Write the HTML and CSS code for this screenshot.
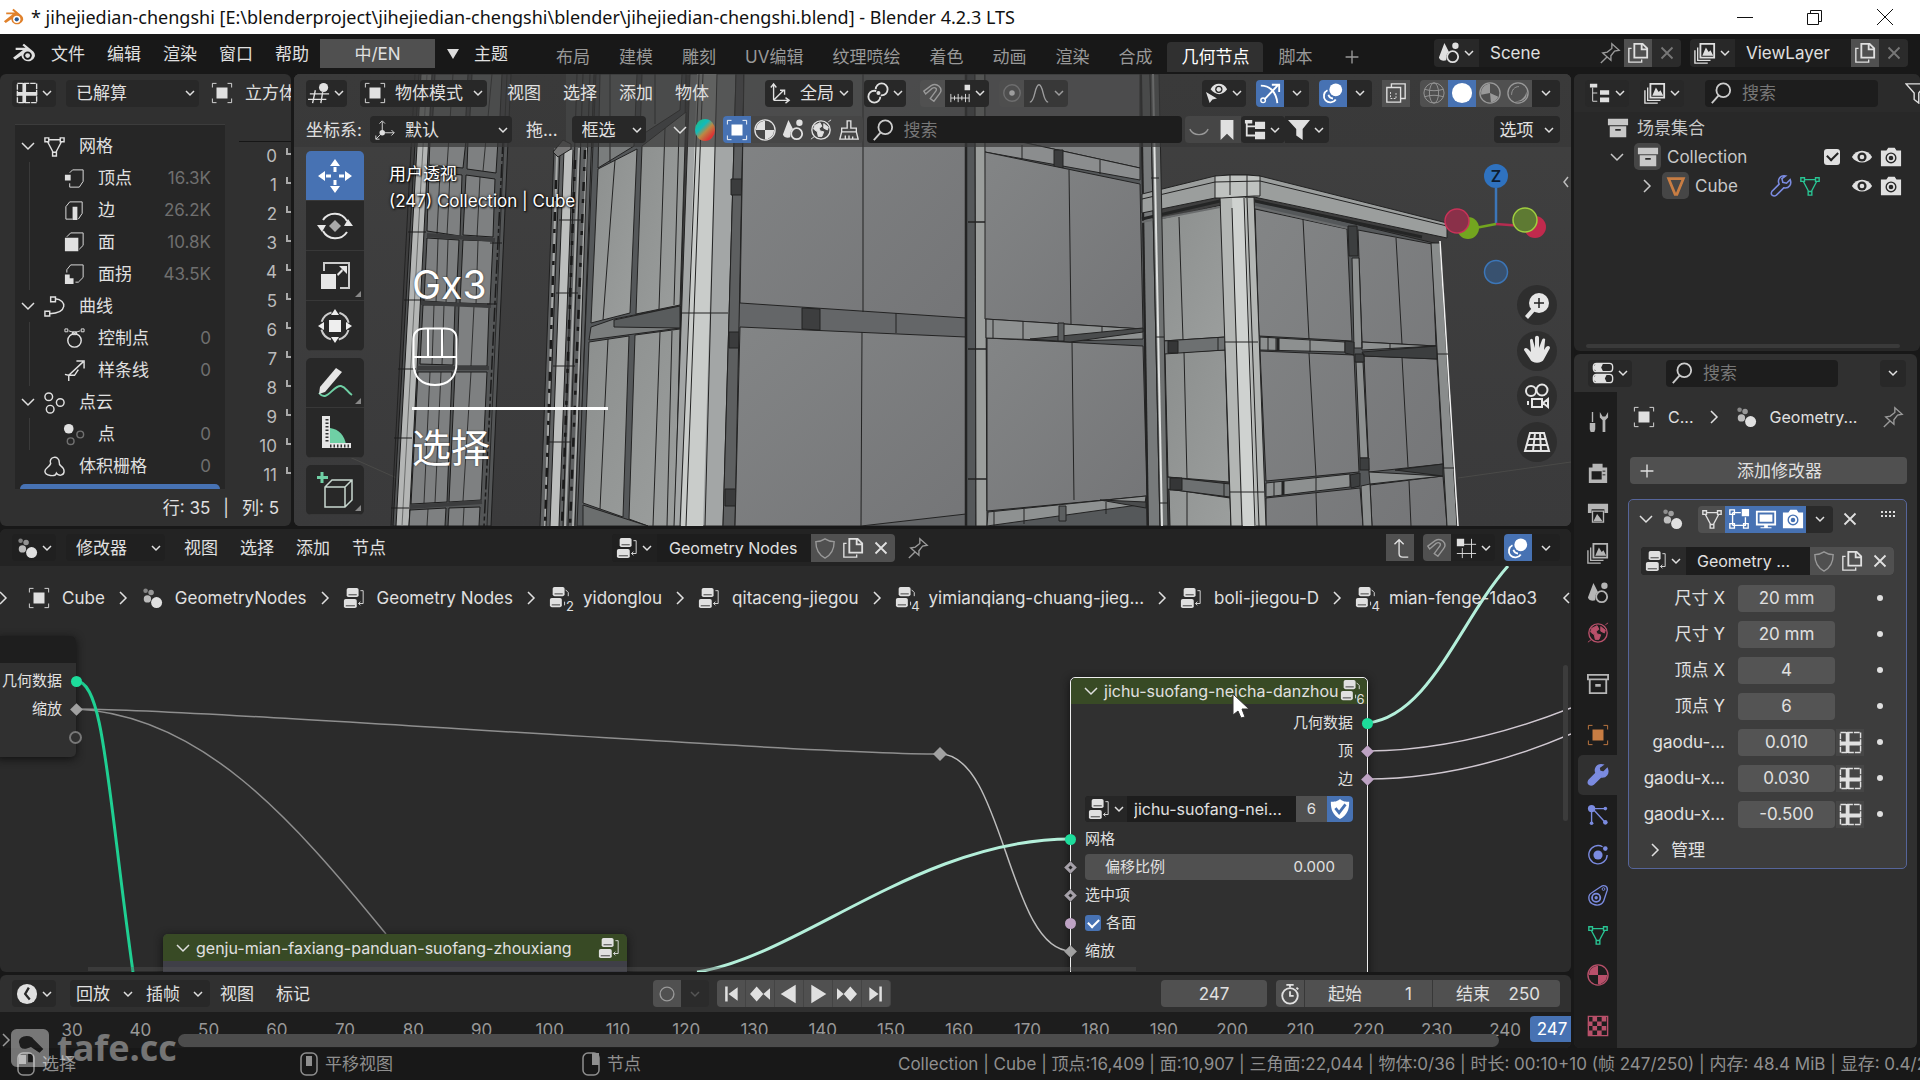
FILE: index.html
```html
<!DOCTYPE html>
<html lang="zh-CN">
<head>
<meta charset="utf-8">
<title>jihejiedian-chengshi - Blender 4.2.3 LTS</title>
<link rel="stylesheet" href="styles.css">
</head>
<body>
<svg class="defs" aria-hidden="true">
  <symbol id="blender" viewBox="0 0 24 24"><path d="M1 16.500 10.500 9H3.500V7H13L10 4.500 11.500 3l9 7.500a6.500 5.800 0 1 1-11.500 4L3 18.500z" fill="currentColor"/><circle cx="15" cy="14.500" r="4" fill="var(--hole,#181818)"/><circle cx="15" cy="14.500" r="2.300" fill="var(--dot,currentColor)"/></symbol>
  <symbol id="chev" viewBox="0 0 12 12"><path d="M2 4l4 4 4-4" class="s15"/></symbol>
  <symbol id="right" viewBox="0 0 12 16"><path d="M3 2l6 6-6 6" class="s15"/></symbol>
  <symbol id="left" viewBox="0 0 12 16"><path d="M9 3L4 8l5 5" class="s15"/></symbol>
  <symbol id="down" viewBox="0 0 16 12"><path d="M2 3l6 6 6-6" class="s15"/></symbol>
  <symbol id="x" viewBox="0 0 24 24"><path d="M6 6l12 12M18 6L6 18" class="s2"/></symbol>
  <symbol id="plus" viewBox="0 0 24 24"><path d="M12 5v14M5 12h14" class="s15"/></symbol>
  <symbol id="sheet" viewBox="0 0 24 24"><path d="M1.500 1.500h21v21h-21z" class="s15" stroke-dasharray="6 1"/><path d="M7 1h4v10h12v4H11v8H7v-8H1v-4h6z" fill="currentColor"/></symbol>
  <symbol id="object" viewBox="0 0 24 24"><path d="M6 6h12v12H6z" fill="currentColor"/><path d="M1.500 6V1.500H6M18 1.500h4.500V6M22.500 18v4.500H18M6 22.500H1.500V18" class="s1"/></symbol>
  <symbol id="mesh" viewBox="0 0 24 24"><path d="M5.500 5h13M4.500 6.500L10.500 18M19.500 6.500L13.500 18M2 3h4v4H2zM18 3h4v4h-4zM10 18h4v4h-4z" class="s15"/></symbol>
  <symbol id="vert" viewBox="0 0 24 24"><path d="M7 6l3-3h11v12l-4 6H7v-4" class="s1"/><path d="M2 8h6v6H2z" fill="currentColor"/></symbol>
  <symbol id="edge" viewBox="0 0 24 24"><path d="M10 21H3V8l4-5h13v12l-4 6" class="s1"/><path d="M10 8h5v14h-5z" fill="currentColor"/></symbol>
  <symbol id="face" viewBox="0 0 24 24"><path d="M4 6l4-4h13v13l-4 4" class="s1"/><path d="M2 7h14v14H2z" fill="currentColor"/></symbol>
  <symbol id="corner" viewBox="0 0 24 24"><path d="M4 10V7l4-5h13v13l-5 5h-3" class="s1"/><path d="M2 12h5v4h4v6H2z" fill="currentColor"/></symbol>
  <symbol id="curve" viewBox="0 0 24 24"><path d="M2 17h5v5H2zM8 2h5v5H8zM13 4c12 1 13 15-6 15.500" class="s15"/></symbol>
  <symbol id="cpoint" viewBox="0 0 24 24"><circle cx="12" cy="14" r="7" class="s15"/><path d="M6 4l6 2 6-2M2 2h3v3H2zM19 2h3v3h-3zM10 5h4v3h-4z" class="s1"/></symbol>
  <symbol id="spline" viewBox="0 0 24 24"><path d="M6 23v-6l-4-1M6 17L21 3M14 2h8v8M6 17h6l4-6" class="s15"/></symbol>
  <symbol id="pcloud" viewBox="0 0 24 24"><circle cx="6" cy="6" r="4" class="s15"/><circle cx="18" cy="12" r="4" class="s15"/><circle cx="7.500" cy="19" r="4" class="s15"/></symbol>
  <symbol id="point" viewBox="0 0 24 24"><circle cx="6" cy="6" r="5" fill="currentColor"/><g opacity=".4"><circle cx="18" cy="12" r="3.500" class="s15"/><circle cx="8" cy="19" r="3.500" class="s15"/></g></symbol>
  <symbol id="volume" viewBox="0 0 24 24"><path d="M8 9C5 2 17-1 17 8c-1 4 5 3 5 9 0 5-6 5-8 2-1 4-12 3-12-2 0-4 4-3 6-8z" class="s15"/></symbol>
  <symbol id="view3d" viewBox="0 0 24 24"><path d="M2 13h21M0 19h20M8 9L5 23M16 11l-2 12" class="s15"/><circle cx="17" cy="6" r="5" fill="currentColor"/></symbol>
  <symbol id="axes" viewBox="0 0 24 24"><path d="M5 20V3M2 6l3-4 3 4M5 20h16M18 17l4 3-4 3M5 20L16 9M12 9h5v5" class="s15"/></symbol>
  <symbol id="axes2" viewBox="0 0 24 24"><path d="M9 14V3M6 5l3-3 3 3M12 15h10M19 12l3 3-3 3M7 17l-5 5M2 18v4h4" class="s1"/><circle cx="9" cy="15" r="3" fill="currentColor"/></symbol>
  <symbol id="link" viewBox="0 0 24 24"><circle cx="16" cy="8" r="6.500" class="s2" stroke-dasharray="32 9" stroke-dashoffset="-20"/><circle cx="8" cy="16" r="6.500" class="s2" stroke-dasharray="32 9"/><circle cx="12.500" cy="12" r="2.200" fill="currentColor"/></symbol>
  <symbol id="magnet" viewBox="0 0 24 24"><path d="M2 10l8-6c6-4 14 3 9 9l-6 8-4-3 6-8c2-3-1-5-4-3l-7 6z" class="s15"/></symbol>
  <symbol id="snap" viewBox="0 0 24 24"><path d="M2 13v9M6 15v5M10 13v9M14 15v5M18 13v9M22 13v9M2 17.500h20" class="s1"/><path d="M17 3h6v6h-6z" fill="currentColor"/></symbol>
  <symbol id="snapg" viewBox="0 0 24 24"><path d="M8 12v11M18 2v21M8 8h15M2 18h21" class="s1"/><path d="M2 2h8v8H2z" fill="currentColor"/></symbol>
  <symbol id="prop" viewBox="0 0 24 24"><circle cx="12" cy="12" r="9" class="s15" opacity=".4"/><circle cx="12" cy="12" r="3" fill="currentColor"/></symbol>
  <symbol id="falloff" viewBox="0 0 24 24"><path d="M2 22c6 0 5-19 10-19s4 19 10 19" class="s15"/></symbol>
  <symbol id="eyecur" viewBox="0 0 24 24"><path d="M5 8c4-8 14-8 18 0-4 7-13 7-18 0z" fill="currentColor"/><circle cx="14" cy="8" r="4" fill="#282828"/><circle cx="14" cy="8" r="2.500" fill="currentColor"/><path d="M0 11l4 12 3-4 5-1z" fill="currentColor"/></symbol>
  <symbol id="gizmo" viewBox="0 0 24 24"><path d="M2 4c10 0 17 7 18 19M6 19L21 3M14 3h8v8" class="s2"/><circle cx="4.500" cy="20" r="2.500" class="s15"/></symbol>
  <symbol id="overlay" viewBox="0 0 24 24"><circle cx="15" cy="8.500" r="7" fill="currentColor"/><path d="M6 9a7 7 0 1 0 9 10M7 14c1 3 3 4 5 4" class="s2"/></symbol>
  <symbol id="xray" viewBox="0 0 24 24"><path d="M2 6h15v16H2zM7 6V2h15v16h-5" class="s15"/><path d="M6 11v7h7M12 12v6" class="s1" stroke-dasharray="2 1.500"/></symbol>
  <symbol id="wire" viewBox="0 0 24 24"><circle cx="12" cy="12" r="11" class="s1"/><ellipse cx="12" cy="12" rx="5" ry="11" class="s1"/><path d="M2 8c7 2 13 2 20 0M2 16c7-2 13-2 20 0" class="s1"/></symbol>
  <symbol id="solid" viewBox="0 0 24 24"><circle cx="12" cy="12" r="11" fill="currentColor"/></symbol>
  <symbol id="matprev" viewBox="0 0 24 24"><circle cx="12" cy="12" r="11" class="s15"/><path d="M12 2a10 10 0 0 0-9.500 12L12 12zM12 12l9 4a10 10 0 0 1-8 6z" fill="currentColor"/></symbol>
  <symbol id="render" viewBox="0 0 24 24"><circle cx="12" cy="12" r="11" class="s15"/><path d="M5 14c0-5 3-9 8-9" class="s1"/><path d="M8 21c8 1 13-6 13-11 2 7-3 13-13 11z" fill="currentColor"/></symbol>
  <symbol id="mat" viewBox="0 0 24 24"><circle cx="12" cy="12" r="11" class="s15"/><path d="M12 2v10H2A10 10 0 0 1 12 2zM12 12h10a10 10 0 0 1-10 10z" fill="currentColor"/></symbol>
  <symbol id="scene" viewBox="0 0 24 24"><path d="M7 1L1 17c1 4 6 4 8 3 0-6 1-8 3-9z" fill="currentColor"/><circle cx="16" cy="16" r="6" class="s2"/><circle cx="19" cy="4" r="3.500" fill="currentColor"/></symbol>
  <symbol id="world" viewBox="0 0 24 24"><circle cx="12" cy="12" r="10" class="s15"/><path d="M5 7l6-3 2 4-3 2 1 3 4 1-2 5-4 0-1-5-4-3zM15 5l5 4-1 3-4-2zM1 22l4-3M20 3l3-2" fill="currentColor" stroke="currentColor"/></symbol>
  <symbol id="brush" viewBox="0 0 24 24"><path d="M10 2h4v8h6v4H4v-4h6zM4 14l-2 8h20l-2-8M8 22v-4M12 22v-4M16 22v-3" class="s15"/></symbol>
  <symbol id="search" viewBox="0 0 24 24"><circle cx="14.500" cy="9" r="7.500" class="s2"/><path d="M9.500 14.500L2 23" class="s2"/></symbol>
  <symbol id="arc" viewBox="0 0 24 24"><path d="M2 11c4 8 16 8 20 0" class="s15"/></symbol>
  <symbol id="bookmark" viewBox="0 0 24 24"><path d="M5 1h14v22l-7-7-7 7z" fill="currentColor"/></symbol>
  <symbol id="tree" viewBox="0 0 24 24"><path d="M3 2v16h9M3 8h9" class="s2"/><path d="M1 1h8v4H1zM12 3h11v8H12zM12 14h11v8H12z" fill="currentColor"/></symbol>
  <symbol id="outliner" viewBox="0 0 24 24"><path d="M4 6v15h5M4 12h5" class="s1"/><path d="M1 2h8v4H1zM12 9h10v5H12zM12 17h10v5H12z" fill="currentColor"/></symbol>
  <symbol id="filter" viewBox="0 0 24 24"><path d="M0 1h24l-8 10v12l-7-5v-7z" fill="currentColor"/></symbol>
  <symbol id="filtero" viewBox="0 0 24 24"><path d="M1 2h22l-8 10v11l-5-4v-7z" class="s15"/></symbol>
  <symbol id="vlayer" viewBox="0 0 24 24"><path d="M7 2h15v15H7z" class="s2"/><path d="M4 6v14h14M1 9v14h14" class="s15"/><path d="M9 15l4-9 3 5 2-2 3 6z" fill="currentColor"/></symbol>
  <symbol id="pin" viewBox="0 0 24 24"><path d="M14 2l8 7-5 1-4 5v5L4 12l5-1 5-4zM9 16l-7 7" class="s15"/></symbol>
  <symbol id="copy" viewBox="0 0 24 24"><path d="M8 2h9l5 5v10H8zM16 2v6h6" class="s2"/><path d="M5 7H2v15h14v-3" class="s15"/></symbol>
  <symbol id="shield" viewBox="0 0 24 24"><path d="M12 2c3 2 6 3 10 3 0 8-2 14-10 18C4 19 2 13 2 5c4 0 7-1 10-3z" class="s15"/></symbol>
  <symbol id="shieldon" viewBox="0 0 24 24"><path d="M12 1c3 3 6 3 10 3 0 9-2 14-10 19C4 18 2 13 2 4c4 0 7 0 10-3z" fill="#fff"/><path d="M7 11l4 5 7-9" fill="none" stroke="#4772b3" stroke-width="3"/></symbol>
  <symbol id="coll" viewBox="0 0 24 24"><path d="M1 2h22v7H1zM3 10h18v12H3z" fill="currentColor"/><path d="M9 13h6v2H9z" fill="#282828"/></symbol>
  <symbol id="collo" viewBox="0 0 24 24"><path d="M1 2h22v5H1zM3 7h18v15H3z" class="s2"/><path d="M9 12h6v3H9z" fill="currentColor"/></symbol>
  <symbol id="cone" viewBox="0 0 24 24"><path d="M4 4h16l-7 17h-2z" class="s3"/></symbol>
  <symbol id="wrench" viewBox="0 0 24 24"><path d="M17 1c-7-1-9 5-7 9L2 18c-2 4 2 6 5 4l8-8c6 1 9-4 7-9l-4 4-4-1-1-4z" fill="var(--f,none)" stroke="currentColor" stroke-width="1.700"/></symbol>
  <symbol id="eye" viewBox="0 0 24 24"><path d="M1 12c5-9 17-9 22 0-5 8-17 8-22 0z" fill="currentColor"/><circle cx="12" cy="12" r="5" fill="#282828"/><circle cx="12" cy="12" r="2.500" fill="currentColor"/></symbol>
  <symbol id="cam" viewBox="0 0 24 24"><path d="M1 5h6l2-3h7l2 3h5v17H1z" fill="currentColor"/><circle cx="12" cy="13" r="6" fill="var(--hole,#282828)"/><circle cx="12" cy="13" r="4.500" fill="currentColor"/><circle cx="12" cy="13" r="2.500" fill="var(--hole,#282828)"/></symbol>
  <symbol id="geo" viewBox="0 0 24 24"><circle cx="5" cy="4" r="2.500" fill="currentColor" opacity=".5"/><circle cx="11" cy="6" r="3" fill="currentColor" opacity=".6"/><circle cx="7" cy="13" r="4" fill="currentColor" opacity=".8"/><circle cx="17" cy="17" r="6" fill="currentColor"/></symbol>
  <symbol id="nodes" viewBox="0 0 24 24"><rect x="4" y="1" width="13" height="10" rx="2" fill="currentColor"/><rect x="1" y="13" width="14" height="10" rx="2" fill="currentColor"/><path d="M6 8.500h9M3 20.500h10" stroke="#333"/><path d="M19 4h3v14h-5M19 16l-2 2 2 2" class="s1"/></symbol>
  <symbol id="nodesn" viewBox="0 0 24 24"><rect x="4" y="0" width="13" height="10" rx="2" fill="currentColor"/><rect x="1" y="12" width="13" height="10" rx="2" fill="currentColor"/><path d="M6 7.500h9M3 19.500h9" stroke="#333"/><path d="M18 3l3 3v4M17 16v4" class="s1"/></symbol>
  <symbol id="uparrow" viewBox="0 0 24 24"><path d="M21 22h-6c-3 0-4-1-4-4V3M6 8l5-5 5 5" class="s15"/></symbol>
  <symbol id="clock" viewBox="0 0 24 24"><circle cx="12" cy="12" r="11" fill="currentColor"/><path d="M14 5l-4 7 5 6" fill="none" stroke="#282828" stroke-width="2.500"/></symbol>
  <symbol id="watch" viewBox="0 0 24 24"><circle cx="12" cy="14" r="8.500" class="s2"/><path d="M12 9v5h4M8 2h8M12 2v3M19 5l2 2" class="s2"/></symbol>
  <symbol id="rec" viewBox="0 0 24 24"><circle cx="12" cy="12" r="7.500" class="s15"/></symbol>
  <symbol id="first" viewBox="0 0 24 24"><path d="M5 3h3v18H5zM20 4v16L9 12z" fill="currentColor"/></symbol>
  <symbol id="prevk" viewBox="0 0 24 24"><path d="M0 12l8-9 8 9-8 9zM24 5v14l-8-7z" fill="currentColor"/></symbol>
  <symbol id="play" viewBox="0 0 24 24"><path d="M4 1l18 11L4 23z" fill="currentColor"/></symbol>
  <symbol id="props" viewBox="0 0 24 24"><rect x="1.500" y="1.500" width="21" height="9" rx="3.500" class="s15"/><rect x="1.500" y="13.500" width="21" height="9" rx="3.500" class="s15"/><path d="M2 5l2-3h8l-2 4 2 4H5l-3-2zM2 17l2-3h12l-2 4 2 4H5l-3-2z" fill="currentColor"/></symbol>
  <symbol id="tools" viewBox="0 0 24 24"><path d="M6 1v11" class="s15"/><path d="M3 13h6v7l-1 3H4l-1-3zM14 1v6l3 3v13h3V10l3-3V1l-3 5h-3z" fill="currentColor"/></symbol>
  <symbol id="rcam" viewBox="0 0 24 24"><path d="M2 6h4V2h11v4h5v17H2zM5 10v9h11v-9z" fill="currentColor" fill-rule="evenodd"/><path d="M17 10h3M17 14h3" stroke="#1d1d1d"/></symbol>
  <symbol id="output" viewBox="0 0 24 24"><path d="M1 2h22v10h-4V8H5v4H1z" fill="currentColor"/><path d="M6 10h12v12H6z" class="s15"/><path d="M7 21l4-8 3 4 3 4z" fill="currentColor"/></symbol>
  <symbol id="part" viewBox="0 0 24 24"><path d="M6 5h14M6 5l13 14M5 6v15" class="s15"/><circle cx="5" cy="5" r="4" fill="currentColor"/><circle cx="20" cy="5" r="2" fill="currentColor"/><circle cx="20" cy="20" r="2.500" fill="currentColor"/><circle cx="5" cy="21" r="2" fill="currentColor"/></symbol>
  <symbol id="physics" viewBox="0 0 24 24"><path d="M17 3a10 10 0 1 0 5 9" class="s15"/><circle cx="12" cy="12" r="5" fill="currentColor"/><circle cx="20" cy="5" r="2.500" fill="currentColor"/></symbol>
  <symbol id="constr" viewBox="0 0 24 24"><path d="M15 3c4-3 8 0 7 4l-4 12c-4 7-16 4-16-4 0-3 2-5 4-6z" class="s15"/><circle cx="10" cy="15" r="4.500" class="s2"/><circle cx="10" cy="15" r="1.800" fill="currentColor"/><circle cx="18" cy="5.500" r="1.500" class="s1"/></symbol>
  <symbol id="checker" viewBox="0 0 24 24"><path d="M1.500 1.500h21v21h-21z" class="s15"/><path d="M6 2h5v5H6zM16 2h5v5h-5zM1 7h5v5H1zM11 7h5v5h-5zM6 12h5v5H6zM16 12h5v5h-5zM1 17h5v5H1zM11 17h5v5h-5z" fill="currentColor"/></symbol>
  <symbol id="editbox" viewBox="0 0 24 24"><path d="M5 5h9M5 5v14M5 19h14V10" class="s15"/><path d="M2 2h5v5H2zM2 17h5v5H2zM17 17h5v5h-5z" class="s15"/><path d="M15 1h8v8h-8z" fill="currentColor"/></symbol>
  <symbol id="monitor" viewBox="0 0 24 24"><path d="M2 4h20v14H2z" class="s2"/><path d="M5 7h14v8H5zM10 18h4v3h4v1H6v-1h4z" fill="currentColor"/></symbol>
  <symbol id="grip" viewBox="0 0 16 8"><path d="M1 2h14M1 6h14" stroke="currentColor" stroke-width="2" stroke-dasharray="2 2"/></symbol>
  <symbol id="mouseL" viewBox="0 0 18 24"><rect x="1" y="1" width="16" height="22" rx="5" class="s15"/><path d="M2 3h7v9H2z" fill="currentColor"/></symbol>
  <symbol id="mouseM" viewBox="0 0 18 24"><rect x="1" y="1" width="16" height="22" rx="5" class="s15"/><path d="M6 4h6v10H6z" fill="currentColor"/></symbol>
  <symbol id="mouseR" viewBox="0 0 18 24"><rect x="1" y="1" width="16" height="22" rx="5" class="s15"/><path d="M10 1h7v12h-7z" fill="currentColor"/></symbol>
</svg>

<div class="app">
  <header class="title">
    <svg class="ic logo"><use href="#blender"/></svg>
    <h1>* jihejiedian-chengshi [E:\blenderproject\jihejiedian-chengshi\blender\jihejiedian-chengshi.blend] - Blender 4.2.3 LTS</h1>
    <div class="winbtns">
      <button aria-label="最小化"><svg viewBox="0 0 16 16"><path d="M0 8.500h16" class="s1"/></svg></button>
      <button aria-label="还原"><svg viewBox="0 0 16 16"><path d="M.5 4.500h11v11H.5zM3.500 4V1.500h11v11H12" class="s1"/></svg></button>
      <button aria-label="关闭"><svg viewBox="0 0 16 16"><path d="M0 0l16 16M16 0L0 16" class="s1"/></svg></button>
    </div>
  </header>

  <nav class="topbar">
    <svg class="ic big"><use href="#blender"/></svg>
    <div class="menus"><button>文件</button><button>编辑</button><button>渲染</button><button>窗口</button><button>帮助</button></div>
    <button class="lang">中/EN</button>
    <button class="theme"><i></i>主题</button>
    <div class="tabs"><button>布局</button><button>建模</button><button>雕刻</button><button>UV编辑</button><button>纹理喷绘</button><button>着色</button><button>动画</button><button>渲染</button><button>合成</button><button class="on">几何节点</button><button>脚本</button><button aria-label="添加工作区"><svg class="ic"><use href="#plus"/></svg></button></div>
    <div class="idsel scene-sel"><button class="pick" aria-label="场景"><svg class="ic"><use href="#scene"/></svg><svg class="ch"><use href="#chev"/></svg></button><input aria-label="场景名称" value="Scene"><button class="flat dim" aria-label="固定"><svg class="ic"><use href="#pin"/></svg></button><button class="lit" aria-label="新建"><svg class="ic"><use href="#copy"/></svg></button><button class="off" aria-label="删除"><svg class="ic"><use href="#x"/></svg></button></div>
    <div class="idsel layer-sel"><button class="pick" aria-label="视图层"><svg class="ic"><use href="#vlayer"/></svg><svg class="ch"><use href="#chev"/></svg></button><input aria-label="视图层名称" value="ViewLayer"><button class="lit" aria-label="新建"><svg class="ic"><use href="#copy"/></svg></button><button class="off" aria-label="删除"><svg class="ic"><use href="#x"/></svg></button></div>
  </nav>

  <main class="work">
    <div class="leftcol">
      <div class="upper">
        <section class="sheet">
          <div class="hdr">
            <button class="pick" aria-label="编辑器类型"><svg class="ic"><use href="#sheet"/></svg><svg class="ch"><use href="#chev"/></svg></button>
            <span class="sel w133"><select aria-label="求值状态"><option>已解算</option></select><svg class="ch"><use href="#chev"/></svg></span>
            <span class="objname"><svg class="ic"><use href="#object"/></svg>立方体</span>
          </div>
          <div class="sheetbody">
            <ul class="dataset">
              <li><svg class="dn"><use href="#down"/></svg><svg class="ic"><use href="#mesh"/></svg><b>网格</b></li>
              <li class="sub"><svg class="ic"><use href="#vert"/></svg><b>顶点</b><em>16.3K</em></li>
              <li class="sub"><svg class="ic"><use href="#edge"/></svg><b>边</b><em>26.2K</em></li>
              <li class="sub"><svg class="ic"><use href="#face"/></svg><b>面</b><em>10.8K</em></li>
              <li class="sub"><svg class="ic"><use href="#corner"/></svg><b>面拐</b><em>43.5K</em></li>
              <li><svg class="dn"><use href="#down"/></svg><svg class="ic"><use href="#curve"/></svg><b>曲线</b></li>
              <li class="sub"><svg class="ic"><use href="#cpoint"/></svg><b>控制点</b><em>0</em></li>
              <li class="sub"><svg class="ic"><use href="#spline"/></svg><b>样条线</b><em>0</em></li>
              <li><svg class="dn"><use href="#down"/></svg><svg class="ic"><use href="#pcloud"/></svg><b>点云</b></li>
              <li class="sub"><svg class="ic"><use href="#point"/></svg><b>点</b><em>0</em></li>
              <li class="leaf"><svg class="ic"><use href="#volume"/></svg><b>体积栅格</b><em>0</em></li>
              <li class="picked"></li>
            </ul>
            <div class="vbar"></div>
            <table class="rows"><thead><tr><th></th><th></th></tr></thead><tbody>
              <tr><td>0</td><td></td></tr><tr><td>1</td><td></td></tr><tr><td>2</td><td></td></tr><tr><td>3</td><td></td></tr><tr><td>4</td><td></td></tr><tr><td>5</td><td></td></tr><tr><td>6</td><td></td></tr><tr><td>7</td><td></td></tr><tr><td>8</td><td></td></tr><tr><td>9</td><td></td></tr><tr><td>10</td><td></td></tr><tr><td>11</td><td></td></tr></tbody></table>
          </div>
          <div class="sheetfoot"><span>行: 35</span><span>|</span><span>列: 5</span></div>
        </section>

        <section class="view">
          <svg class="scene" viewBox="294 74 1277 452" preserveAspectRatio="xMidYMid slice">
            <defs>
              <linearGradient id="bg" x1="0" y1="0" x2="0" y2="1"><stop offset="0" stop-color="#404040"/><stop offset="1" stop-color="#3a3a3b"/></linearGradient>
              <linearGradient id="lt" x1="0" y1="0" x2="1" y2="1"><stop offset="0" stop-color="#8c8f8e"/><stop offset="1" stop-color="#9b9e9d"/></linearGradient>
              <linearGradient id="md" x1="0" y1="0" x2="1" y2="1"><stop offset="0" stop-color="#838586"/><stop offset="1" stop-color="#747577"/></linearGradient>
            </defs>
            <path d="M294 74h1277v452H294z" fill="url(#bg)"/>
            <path d="M1458 478L1571 462M345 455l54 24" stroke="#4a4a48" fill="none"/>
            <g stroke="#1c1c1c">
              <path d="M419 74h92L491 526h-98z" fill="#535556"/>
              <path d="M421 74h11L409 526h-13z" fill="#b4b6b5"/>
              <path d="M427 74L402 526" stroke="#6b6d6c"/>
              <path d="M435 74h33l-3 60-33-3zM472 74h30l-3 64-30-4zM430 140h36l-3 28-34-3zM468 140h30l-2 33-29-4zM429 171l33 4-2 61-33-5zM466 175l29 4-2 58-30-2zM427 238l32 2-3 63-32-2zM463 240l30 1-3 63-30-1zM423 305h32l-2 60-33-1zM459 305l30 2-2 59h-30zM418 372h34l-5 130-36 2zM455 372h32l-6 128-32 2zM410 510l36-2-1 18h-36zM449 508l31-1-1 19h-31z" fill="#7e8081"/>
              <path d="M453 74l-6 93M492 74l-9 97M440 173l-3 61M450 174l-3 61M480 177l-3 60M438 239l-2 64M448 240l-2 63M478 241l-2 63M434 305l-2 60M444 305l-2 60M474 306l-3 60M430 372l-6 131M441 372l-6 131M471 372l-8 129M428 509l-1 17M464 508l-1 18M507 74l-20 452M415 74l-24 452" fill="none" stroke-width=".8"/>
              <path d="M503 140l-19 386" stroke-dasharray="14 3 4 3" stroke-width="1.500" fill="none"/>
              <path d="M427 235l68 5M421 303l70 3M417 368h72M410 507l72-5" stroke="#3c3d3e" stroke-width="4"/>
              <path d="M408 232h18M404 300h20M398 369h18M394 438h18M391 508h18M490 243h12M487 304h10" />
            </g>
            <path d="M566 74h28l-3 80h-25zM554 148h40l-16 378h-38z" fill="#5f6162"/>
            <path d="M564 150h9l-14 376h-9z" fill="#bcbebd"/>
            <path d="M557 156l-12 370M579 148l-14 378M587 148l-14 378" stroke="#a9abaa" stroke-width="2" fill="none"/>
            <path d="M554 150l-14 376M560 150l-14 376M564 150l-14 376M573 150l-14 376M577 74l-14 452M583 74l-15 452M590 74l-15 452M594 74l-16 452" stroke="#1f1f1f" fill="none"/>
            <path d="M556 180l-11 346M575 160l-13 366M585 150l-15 376" stroke="#1a1a1a" stroke-width="2.500" stroke-dasharray="9 8 4 11" fill="none"/>
            <path d="M559 220h23M556 293h22M553 366h22M549 442h22M553 152l10-12 8 4v5l-13 8z" fill="#777" stroke="#222"/>
            <g stroke="#232323" stroke-width="1">
              <path d="M596 74h90l-10 452h-99z" fill="#55585a"/>
              <path d="M600 74h37l-3 72-36 22zM642 74h40l-2 36-40 26z" fill="#7a7d7d"/>
              <path d="M598 169l39-20-7 164-39 10z" fill="url(#lt)"/>
              <path d="M642 146l44-34-6 193-44 9z" fill="url(#lt)"/>
              <path d="M589 342l40-6-6 181-40-14zM635 335l45-6-5 197h-27l-19-7z" fill="url(#lt)"/>
              <path d="M591 327l23-8 66-13v22l-91 12z" fill="#7b7e7e"/><path d="M614 320l66-14v22l-66-1z" fill="#595c5d"/>
              <path d="M615 160l-12 160M665 128l-6 181M608 339l-8 170M660 332l-7 194M679 130l-5 175M672 331l-5 195M610 74v88M655 74v50" fill="none"/>
              <path d="M583 505l65 21h-65z" fill="#6b6e6e"/>
              <path d="M690 74h46l-13 452h-49z" fill="#a3a6a6"/>
              <path d="M697 74h20l-14 452h-22z" fill="#c9ccca" stroke="none"/>
              <path d="M699 74l-19 452M703 74l-17 452M717 74l-12 452M680 313h48" fill="none"/>
              <path d="M736 74h8l-8 452h-13z" fill="#5d5f60"/>
              <path d="M731 179h12v16h-12zM729 332h11v16h-11zM725 489h11v17h-11z" fill="#3b3c3d"/>
              <path d="M744 74h222v452H735z" fill="#646668"/>
              <path d="M744 74h222v244l-226-15z" fill="url(#md)"/>
              <path d="M740 327l226 10v177l-105 12H735z" fill="url(#md)"/>
              <path d="M802 308l18 1v21l-18-1z" fill="#3d3e3f"/>
              <path d="M863 74v238M862 332l-1 194M896 313v20" fill="none"/>
              <path d="M966 74h9l1 452h-10z" fill="#55585a"/>
              <path d="M975 74h10l3 452h-12z" fill="#9b9e9c"/>
              <path d="M966 74v452" stroke-width="2.500"/><path d="M968 222h19M968 349h19M968 479h19" stroke-width="1.500"/>
              <path d="M985 74h156l6 452H987z" fill="#55585a"/>
              <path d="M985 74h155v94l-155-34z" fill="#818384"/>
              <path d="M985 134l155 34v12l-155-28z" fill="#8b8d8e"/>
              <path d="M1054 150h9v18h-9z" fill="#3b3c3d"/>
              <path d="M985 152l155 32 3 145-158-10z" fill="url(#md)"/>
              <path d="M987 338l156 8 4 150-160 15z" fill="url(#md)"/>
              <path d="M986 319l157 10v10l-73 2-84-3zM988 512l158-16-1 8-158 22z" fill="#8e9191"/>
              <path d="M1030 339l113-11v4l-73 10zM1100 500l46 2v6z" fill="#4a4c4d"/>
              <path d="M993 320v18M1023 321v18M1058 323h6v18h-6zM1102 326v6M994 512v14M1024 509v15M1059 506h7v15h-7zM1106 502v12" fill="#5c5f60"/>
              <path d="M1069 170l2 154M1072 342l2 158M1022 145v14M1100 160v14" fill="none"/>
              <path d="M1141 74h9l10 452h-12z" fill="#777a7b"/>
              <path d="M1141 74l7 452" stroke-width="2"/>
              <path d="M1160 219l62-14 4 132-63 4z" fill="url(#lt)"/>
              <path d="M1165 353l60-3 4 132-61-5zM1169 489l61 9 1 28h-61z" fill="url(#lt)"/>
              <path d="M1163 341l62-4v13l-61 4zM1167 477l63 7v13l-63-8z" fill="#6d7071"/>
              <path d="M1168 341h10v12h-10zM1170 478h12v12h-12z" fill="#353637"/>
              <path d="M1218 337v13M1224 483v14M1179 217l4 123M1184 352l3 126M1187 492v34" fill="none"/>
              <path d="M1254 200l184 44 19 282h-194z" fill="#55585a"/>
              <path d="M1255 209l92 20 5 112-93-5zM1358 230l74 14 4 102-74-4zM1260 351l94 4 5 117-93 9zM1364 356l73 3 6 105-74 8zM1266 498l94-10 3 38h-97zM1370 485l73-9 4 50h-75z" fill="url(#md)"/>
              <path d="M1260 337l85 5v10l-85-2zM1266 483l84-9v13l-84 10zM1352 258h7l3 90h-8zM1356 362h7l5 96h-8zM1361 486l9-2 2 42h-9zM1362 342l74 4-74 4zM1369 472l74 4-73 8z" fill="#8d9090"/>
              <path d="M1362 352l75-6v13l-73-3zM1395 470l48-6v12zM1345 341l9 1v13l-9-2zM1350 475l10-2v13l-9 2zM1348 226h9l1 30h-9zM1355 354h9v8h-9zM1360 458h9v12h-9z" fill="#3c3e3f"/>
              <path d="M1303 219l6 120M1396 238l6 106M1309 353l7 123M1402 357l6 110M1316 493l1 33M1409 481l2 45M1268 337v13M1276 338v13M1310 340v12M1274 482v14M1283 481v14M1316 478v13M1390 344v5" fill="none"/>
              <path d="M1278 338v13M1283 481v14" stroke-width="3"/>
              <path d="M1431 243h9l17 283h-10z" fill="#898c8c"/><path d="M1440 241l18 285" stroke="#f2f2f2" stroke-width="1.500"/>
              <path d="M1437 354h11M1443 468h11" />
              <path d="M1220 197h34l12 329h-35z" fill="#b3b6b4"/>
              <path d="M1232 197h13l11 329h-13z" fill="#cfd2d0" stroke="none"/><path d="M1232 208l10 318M1244 198l11 328M1247 198l12 328M1225 342h33M1230 492h34" fill="none"/>
              <path d="M1142 194l73-18 15-1h17l13 1 187 47v15l-193-41h-34l-78 16z" fill="#9b9e9d"/>
              <path d="M1215 176l15-1h17l13 1v20h-6l-16 1-16 1h-7z" fill="#bfc2c0"/>
              <path d="M1142 199l73-17 45-1 187 45M1230 175v20M1247 175v21" fill="none"/>
              <path d="M1142 219l78-18M1255 201l167 36" stroke="#242525" stroke-width="3" fill="none"/>
              <path d="M1142 222l78-15M1255 207l92 21" stroke="#6a6c6d" stroke-width="2" fill="none"/>
              <path d="M1150 74h9l9 452h-8z" fill="#6f7272"/><path d="M1153 74l9 452" stroke="#dfe1e0" stroke-width="2"/><path d="M1151 178h8M1156 337h8M1160 503h8"/>
            </g>
            <g stroke-width="2.500" fill="none"><path d="M1496 188v36" stroke="#3c76b8"/><path d="M1496 224l-26 5" stroke="#73a51f"/><path d="M1496 224l38 3" stroke="#b52c50"/></g>
            <circle cx="1468" cy="228" r="11" fill="#73a51f"/><circle cx="1535" cy="227" r="11" fill="#c12a4d"/><circle cx="1457" cy="221" r="12" fill="#8a3049" stroke="#c73258" stroke-width="1.500"/><circle cx="1525" cy="220" r="12" fill="#5e7a33" stroke="#9fce3e" stroke-width="1.500"/><circle cx="1496" cy="272" r="11.500" fill="#38516f" stroke="#3c76b8" stroke-width="1.500"/><circle cx="1496" cy="176" r="12" fill="#2f72bf"/>
            <text x="1496" y="182" text-anchor="middle" class="ztext">Z</text>
            <g fill="#2c2c2c" opacity=".85"><circle cx="1537" cy="305" r="20"/><circle cx="1537" cy="351" r="20"/><circle cx="1537" cy="396" r="20"/><circle cx="1537" cy="442" r="20"/></g>
            <g fill="#e6e6e6"><circle cx="1539" cy="303" r="10"/><path d="M1532 308l3 3-7 8-3-3z"/><path d="M1530 359l-6-9c0-2 2-3 4-1l3 3-1-11c0-3 3-3 3 0l2 7 0-10c0-3 4-3 4 0l0 10 3-8c1-2 4-2 3 1l-1 9 2-3c2-2 4-1 4 1l-6 11c-2 5-12 5-14 0z"/></g>
            <path d="M1539 298v10M1534 303h10" stroke="#222" stroke-width="1.500"/>
            <g fill="none" stroke="#e6e6e6" stroke-width="2"><circle cx="1531" cy="391" r="5"/><circle cx="1542" cy="390" r="5.500"/><path d="M1532 399h10v8h-10zM1528 401v4M1543 403l5-4v8z"/><path d="M1530 433h14l5 18h-24zM1535 433l-2 18M1540 433l1 18M1528 439h18M1527 445h21"/></g>
            <path d="M1568 177l-4 5 4 5" stroke="#bbb" fill="none" stroke-width="1.500"/>
          </svg>
          <div class="vhdr">
            <button class="pick vp" aria-label="编辑器类型"><svg class="ic"><use href="#view3d"/></svg><svg class="ch"><use href="#chev"/></svg></button>
            <span class="sel w127"><svg class="ic"><use href="#object"/></svg><select aria-label="模式"><option>物体模式</option></select><svg class="ch"><use href="#chev"/></svg></span>
            <div class="menus vm"><button>视图</button><button>选择</button><button>添加</button><button>物体</button></div>
            <span class="sel w88 orient"><svg class="ic"><use href="#axes"/></svg><select aria-label="变换方向"><option>全局</option></select><svg class="ch"><use href="#chev"/></svg></span>
            <button class="pick narrow" aria-label="轴心点"><svg class="ic"><use href="#link"/></svg><svg class="ch"><use href="#chev"/></svg></button>
            <div class="grp"><button class="lit w24 dim" aria-label="吸附"><svg class="ic"><use href="#magnet"/></svg></button><button class="pick" aria-label="吸附至"><svg class="ic"><use href="#snap"/></svg><svg class="ch"><use href="#chev"/></svg></button></div>
            <div class="grp faded"><button class="lit w24" aria-label="衰减编辑"><svg class="ic"><use href="#prop"/></svg></button><button class="pick" aria-label="衰减类型"><svg class="ic"><use href="#falloff"/></svg><svg class="ch"><use href="#chev"/></svg></button></div>
            <div class="right">
              <button class="pick" aria-label="可见性"><svg class="ic"><use href="#eyecur"/></svg><svg class="ch"><use href="#chev"/></svg></button>
              <div class="grp"><button class="blue" aria-label="控件"><svg class="ic"><use href="#gizmo"/></svg></button><button class="chbtn" aria-label="控件选项"><svg class="ch"><use href="#chev"/></svg></button></div>
              <div class="grp"><button class="blue" aria-label="叠加层"><svg class="ic"><use href="#overlay"/></svg></button><button class="chbtn" aria-label="叠加层选项"><svg class="ch"><use href="#chev"/></svg></button></div>
              <button class="lit" aria-label="透视"><svg class="ic"><use href="#xray"/></svg></button>
              <div class="grp shading"><button class="lit dim" aria-label="线框"><svg class="ic"><use href="#wire"/></svg></button><button class="blue" aria-label="实体"><svg class="ic"><use href="#solid"/></svg></button><button class="lit dim" aria-label="材质预览"><svg class="ic"><use href="#matprev"/></svg></button><button class="lit dim" aria-label="渲染"><svg class="ic"><use href="#render"/></svg></button><button class="chbtn" aria-label="着色选项"><svg class="ch"><use href="#chev"/></svg></button></div>
            </div>
          </div>
          <div class="vhdr second">
            <span class="lab">坐标系:</span>
            <span class="sel w142"><svg class="ic"><use href="#axes2"/></svg><select aria-label="坐标系"><option>默认</option></select><svg class="ch"><use href="#chev"/></svg></span>
            <span class="lab drag">拖...</span>
            <span class="sel w74"><select aria-label="拖动"><option>框选</option></select><svg class="ch"><use href="#chev"/></svg></span>
            <div class="assets">
              <svg class="dn"><use href="#down"/></svg>
              <i class="ball"></i>
              <div class="grp"><button class="blue" aria-label="物体"><svg class="ic"><use href="#object"/></svg></button><button class="lit" aria-label="材质"><svg class="ic"><use href="#mat"/></svg></button><button class="lit" aria-label="场景"><svg class="ic"><use href="#scene"/></svg></button><button class="lit" aria-label="世界"><svg class="ic"><use href="#world"/></svg></button><button class="lit" aria-label="笔刷"><svg class="ic"><use href="#brush"/></svg></button></div>
            </div>
            <label class="find wide"><svg class="ic"><use href="#search"/></svg><input aria-label="搜索资产" placeholder="搜索"></label>
            <div class="grp tail"><button class="lit dim" aria-label="隐藏"><svg class="ic"><use href="#arc"/></svg></button><button class="lit" aria-label="书签"><svg class="ic"><use href="#bookmark"/></svg></button><button class="pick" aria-label="目录"><svg class="ic"><use href="#tree"/></svg><svg class="ch"><use href="#chev"/></svg></button><button class="pick" aria-label="过滤"><svg class="ic"><use href="#filter"/></svg><svg class="ch"><use href="#chev"/></svg></button></div>
            <button class="pick opts">选项<svg class="ch"><use href="#chev"/></svg></button>
          </div>
          <div class="viewbody">
            <div class="toolbar">
              <div class="tg">
                <button class="on" aria-label="移动"><svg viewBox="0 0 36 36"><path d="M18 1l5 7H13zM18 35l5-7H13zM1 18l7-5v10zM35 18l-7-5v10zM16.500 9h3v5h-3zM16.500 22h3v5h-3zM9 16.500h5v3H9zM22 16.500h5v3h-5z" fill="#fff"/></svg></button>
                <button aria-label="旋转"><svg viewBox="0 0 36 36"><path d="M6 12a14 14 0 0 1 24 1M30 24a14 14 0 0 1-24-1" fill="none" stroke="#e6e6e6" stroke-width="2"/><path d="M18 12l6 6-6 6-6-6z" fill="#a9a9a9"/><path d="M0 17h9l-4 7zM36 18h-9l4-7z" fill="#e6e6e6"/></svg></button>
                <button class="more" aria-label="缩放"><svg viewBox="0 0 36 36"><path d="M7 13V5h25v25h-9" fill="none" stroke="#ccc" stroke-width="2"/><path d="M4 16h15v15H4zM22 8h8v8zM20 16l5-5 1 2-5 5z" fill="#e6e6e6"/></svg></button>
                <button aria-label="变换"><svg viewBox="0 0 36 36"><circle cx="18" cy="18" r="14" fill="none" stroke="#ccc" stroke-width="2" stroke-dasharray="14 8" stroke-dashoffset="-4"/><path d="M12 12h12v12H12zM18 1l4 6h-8zM18 35l4-6h-8zM1 18l6-4v8zM35 18l-6-4v8z" fill="#eee"/></svg></button>
              </div>
              <div class="tg">
                <button class="more" aria-label="标注"><svg viewBox="0 0 36 36"><path d="M2 28c8 10 14-8 22-7 5 1 6 6 11 9" fill="none" stroke="#6fd0a5" stroke-width="2"/><path d="M19 3l6 4L8 27l-6 2 1-7z" fill="#e6e6e6"/></svg></button>
                <button aria-label="测量"><svg viewBox="0 0 36 36"><path d="M13 13c9 1 15 8 16 17H13z" fill="#6fd0a5"/><path d="M5 1h8M5 1v32h29v-5H13V1" fill="#e6e6e6"/><path d="M10 4v24M13 31h20" stroke="#333" stroke-dasharray="1.500 2" stroke-width="3"/></svg></button>
              </div>
              <div class="tg"><button class="more" aria-label="添加立方体"><svg viewBox="0 0 36 36"><path d="M8 15l7-7h20v20l-7 7H8zM8 15h20v20M28 15l7-7" fill="none" stroke="#c8d8d0" stroke-width="1.500"/><path d="M5 0v11M0 5.500h11" stroke="#6fd0a5" stroke-width="3"/></svg></button></div>
            </div>
            <div class="hud">
              <p>用户透视</p><p>(247) Collection | Cube</p>
              <div class="keys"><strong>Gx3</strong><svg class="bigmouse" viewBox="0 0 46 60"><path d="M1.500 30V12c0-7 4-10.500 12-10.500h19c8 0 12 3.500 12 10.500v24c0 14-8 22-21.500 22S1.500 50 1.500 36zM1.500 30h43M16 2v28M30 2v28" fill="none" stroke="#fff" stroke-width="2"/></svg><hr><strong>选择</strong></div>
            </div>
          </div>
        </section>
      </div>

      <section class="nodeed">
        <div class="hdr nh">
          <button class="pick" aria-label="编辑器类型"><svg class="ic"><use href="#geo"/></svg><svg class="ch"><use href="#chev"/></svg></button>
          <span class="sel w99"><select aria-label="节点树类型"><option>修改器</option></select><svg class="ch"><use href="#chev"/></svg></span>
          <div class="menus"><button>视图</button><button>选择</button><button>添加</button><button>节点</button></div>
          <div class="idsel tree-sel"><button class="pick" aria-label="节点树"><svg class="ic"><use href="#nodes"/></svg><svg class="ch"><use href="#chev"/></svg></button><input aria-label="节点树名称" value="Geometry Nodes"><button class="lit dim" aria-label="伪用户"><svg class="ic"><use href="#shield"/></svg></button><button class="lit" aria-label="新建"><svg class="ic"><use href="#copy"/></svg></button><button class="lit" aria-label="断开"><svg class="ic"><use href="#x"/></svg></button></div>
          <button class="flat dim" aria-label="固定"><svg class="ic"><use href="#pin"/></svg></button>
          <div class="right">
            <button class="lit" aria-label="上一级"><svg class="ic"><use href="#uparrow"/></svg></button>
            <div class="grp"><button class="lit dim" aria-label="吸附"><svg class="ic"><use href="#magnet"/></svg></button><button class="pick" aria-label="吸附类型"><svg class="ic"><use href="#snapg"/></svg><svg class="ch"><use href="#chev"/></svg></button></div>
            <div class="grp"><button class="blue" aria-label="叠加层"><svg class="ic"><use href="#overlay"/></svg></button><button class="chbtn" aria-label="叠加层选项"><svg class="ch"><use href="#chev"/></svg></button></div>
          </div>
        </div>
        <div class="canvas">
          <svg class="links">
            <g fill="none">
              <path d="M76 143C200 143 800 188 940 188M76 143C200 149 290 250 386 368" stroke="#8e8e8e" stroke-width="1.500"/>
              <path d="M940 188C1004 188 1008 385 1071 385" stroke="#bdbdbd" stroke-width="1.500"/>
              <path d="M76 115C104 115 107 220 133 406" stroke="#1fcf92" stroke-width="3"/>
              <path d="M697 406C800 390 920 273 1071 273" stroke="#b4efda" stroke-width="3"/>
              <path d="M1367 157C1430 150 1460 54 1508 0" stroke="#b4efda" stroke-width="3"/>
              <path d="M1367 185C1440 185 1510 166 1571 142M1367 213C1440 213 1510 194 1571 168" stroke="#d0c8d1" stroke-width="1.500"/>
            </g>
            <path d="M940 181l7 7-7 7-7-7z" fill="#a1a1a1"/>
          </svg>
          <nav class="crumbs">
            <svg class="rt"><use href="#right"/></svg>
            <a href="#"><svg class="ic"><use href="#object"/></svg>Cube</a><svg class="rt"><use href="#right"/></svg>
            <a href="#"><svg class="ic"><use href="#geo"/></svg>GeometryNodes</a><svg class="rt"><use href="#right"/></svg>
            <a href="#"><svg class="ic"><use href="#nodes"/></svg>Geometry Nodes</a><svg class="rt"><use href="#right"/></svg>
            <a href="#"><span class="num"><svg class="ic"><use href="#nodesn"/></svg><sub>2</sub></span>yidonglou</a><svg class="rt"><use href="#right"/></svg>
            <a href="#"><svg class="ic"><use href="#nodes"/></svg>qitaceng-jiegou</a><svg class="rt"><use href="#right"/></svg>
            <a href="#"><span class="num"><svg class="ic"><use href="#nodesn"/></svg><sub>4</sub></span>yimianqiang-chuang-jieg...</a><svg class="rt"><use href="#right"/></svg>
            <a href="#"><svg class="ic"><use href="#nodes"/></svg>boli-jiegou-D</a><svg class="rt"><use href="#right"/></svg>
            <a href="#"><span class="num"><svg class="ic"><use href="#nodesn"/></svg><sub>4</sub></span>mian-fenge-1dao3</a>
            <svg class="rt end"><use href="#left"/></svg>
          </nav>
          <article class="node n-in">
            <header></header>
            <p class="out">几何数据<i class="sock geo"></i></p><p class="out">缩放<i class="sock dia"></i></p><p class="out"><i class="sock ring"></i></p>
          </article>
          <article class="node n-gen">
            <header><svg class="dn"><use href="#down"/></svg><span>genju-mian-faxiang-panduan-suofang-zhouxiang</span><svg class="ic"><use href="#nodes"/></svg></header>
          </article>
          <article class="node n-ji">
            <header><svg class="dn"><use href="#down"/></svg><span>jichu-suofang-neicha-danzhou</span><span class="num"><svg class="ic"><use href="#nodesn"/></svg><sub>6</sub></span></header>
            <p class="out">几何数据<i class="sock geo"></i></p><p class="out">顶<i class="sock dia pk"></i></p><p class="out">边<i class="sock dia pk"></i></p>
            <div class="idsel"><button class="pick" aria-label="节点组"><svg class="ic"><use href="#nodes"/></svg><svg class="ch"><use href="#chev"/></svg></button><input aria-label="节点组名称" value="jichu-suofang-nei..."><button class="lit cnt">6</button><button class="blue" aria-label="伪用户"><svg class="ic"><use href="#shieldon"/></svg></button></div>
            <p><i class="sock geo"></i>网格</p>
            <p><i class="sock dia hollow"></i><label class="slider"><span>偏移比例</span><input value="0.000"></label></p>
            <p><i class="sock dia hollow pk"></i>选中项</p>
            <p><i class="sock pkc"></i><label class="tick"><input type="checkbox" checked>各面</label></p>
            <p><i class="sock dia"></i>缩放</p>
          </article>
          <div class="hscroll"></div><div class="vscroll"></div>
          <svg class="cursor" viewBox="0 0 18 26"><path d="M1 1v21l5-4 3 7 4-1-3-8h7z" fill="#fff" stroke="#333"/></svg>
        </div>
      </section>

      <section class="time">
        <div class="hdr">
          <button class="pick" aria-label="编辑器类型"><svg class="ic"><use href="#clock"/></svg><svg class="ch"><use href="#chev"/></svg></button>
          <div class="grp tmenu"><button class="pick">回放<svg class="ch"><use href="#chev"/></svg></button><button class="pick">插帧<svg class="ch"><use href="#chev"/></svg></button></div>
          <div class="menus"><button>视图</button><button>标记</button></div>
          <div class="grp recg"><button class="lit dim" aria-label="自动插帧"><svg class="ic"><use href="#rec"/></svg></button><button class="chbtn ghost" aria-label="自动插帧选项"><svg class="ch"><use href="#chev"/></svg></button></div>
          <div class="grp play">
            <button class="lit" aria-label="首帧"><svg class="ic"><use href="#first"/></svg></button><button class="lit" aria-label="上一关键帧"><svg class="ic"><use href="#prevk"/></svg></button><button class="lit" aria-label="倒放"><svg class="ic flip"><use href="#play"/></svg></button><button class="lit" aria-label="播放"><svg class="ic"><use href="#play"/></svg></button><button class="lit" aria-label="下一关键帧"><svg class="ic flip"><use href="#prevk"/></svg></button><button class="lit" aria-label="末帧"><svg class="ic flip"><use href="#first"/></svg></button>
          </div>
          <div class="right">
            <input class="num-in" aria-label="当前帧" value="247">
            <div class="grp range"><button class="lit" aria-label="预览范围"><svg class="ic"><use href="#watch"/></svg></button><label class="fr">起始<input value="1"></label><label class="fr">结束<input value="250"></label></div>
          </div>
        </div>
        <div class="ruler">
          <div class="ticks"><span>30</span><span>40</span><span>50</span><span>60</span><span>70</span><span>80</span><span>90</span><span>100</span><span>110</span><span>120</span><span>130</span><span>140</span><span>150</span><span>160</span><span>170</span><span>180</span><span>190</span><span>200</span><span>210</span><span>220</span><span>230</span><span>240</span></div>
          <div class="tbar"></div>
          <b class="cur">247</b>
          <svg class="rt"><use href="#right"/></svg>
        </div>
      </section>
    </div>

    <aside class="rightcol">
      <section class="outl">
        <div class="hdr">
          <button class="pick" aria-label="编辑器类型"><svg class="ic"><use href="#outliner"/></svg><svg class="ch"><use href="#chev"/></svg></button>
          <button class="pick" aria-label="显示模式"><svg class="ic"><use href="#vlayer"/></svg><svg class="ch"><use href="#chev"/></svg></button>
          <label class="find"><svg class="ic"><use href="#search"/></svg><input aria-label="搜索大纲" placeholder="搜索"></label>
          <svg class="ic cut"><use href="#filtero"/></svg>
        </div>
        <ul class="otree">
          <li><svg class="ic"><use href="#coll"/></svg><span>场景集合</span></li>
          <li class="l1"><svg class="dn"><use href="#down"/></svg><i class="chip"><svg class="ic"><use href="#coll"/></svg></i><span>Collection</span><div class="tog"><input type="checkbox" checked aria-label="启用 Collection"><svg class="ic"><use href="#eye"/></svg><svg class="ic"><use href="#cam"/></svg></div></li>
          <li class="l2"><svg class="rt"><use href="#right"/></svg><i class="chip orange"><svg class="ic"><use href="#cone"/></svg></i><span>Cube</span><svg class="ic purple"><use href="#wrench"/></svg><svg class="ic green"><use href="#mesh"/></svg><div class="tog"><svg class="ic"><use href="#eye"/></svg><svg class="ic"><use href="#cam"/></svg></div></li>
        </ul>
        <div class="obar"></div>
      </section>

      <section class="propsed">
        <div class="hdr">
          <button class="pick" aria-label="编辑器类型"><svg class="ic"><use href="#props"/></svg><svg class="ch"><use href="#chev"/></svg></button>
          <label class="find"><svg class="ic"><use href="#search"/></svg><input aria-label="搜索属性" placeholder="搜索"></label>
          <button class="chbtn" aria-label="选项"><svg class="ch"><use href="#chev"/></svg></button>
        </div>
        <div class="pbody">
          <div class="ptabs">
            <button aria-label="工具"><svg class="ic"><use href="#tools"/></svg></button>
            <button class="gap" aria-label="渲染"><svg class="ic"><use href="#rcam"/></svg></button>
            <button aria-label="输出"><svg class="ic"><use href="#output"/></svg></button>
            <button aria-label="视图层"><svg class="ic"><use href="#vlayer"/></svg></button>
            <button aria-label="场景"><svg class="ic"><use href="#scene"/></svg></button>
            <button class="red" aria-label="世界环境"><svg class="ic"><use href="#world"/></svg></button>
            <button class="gap lighter" aria-label="集合"><svg class="ic"><use href="#collo"/></svg></button>
            <button class="gap orange" aria-label="物体"><svg class="ic"><use href="#object"/></svg></button>
            <button class="purple on" aria-label="修改器"><svg class="ic"><use href="#wrench"/></svg></button>
            <button class="purple" aria-label="粒子"><svg class="ic"><use href="#part"/></svg></button>
            <button class="purple" aria-label="物理"><svg class="ic"><use href="#physics"/></svg></button>
            <button class="purple" aria-label="约束"><svg class="ic"><use href="#constr"/></svg></button>
            <button class="green" aria-label="数据"><svg class="ic"><use href="#mesh"/></svg></button>
            <button class="red" aria-label="材质"><svg class="ic"><use href="#mat"/></svg></button>
            <button class="gap red" aria-label="纹理"><svg class="ic"><use href="#checker"/></svg></button>
          </div>
          <div class="pmain">
            <nav class="pcrumb"><svg class="ic"><use href="#object"/></svg><span>C...</span><svg class="rt"><use href="#right"/></svg><svg class="ic"><use href="#geo"/></svg><span>Geometry...</span><button class="flat dim" aria-label="固定"><svg class="ic"><use href="#pin"/></svg></button></nav>
            <button class="addmod"><svg class="ic"><use href="#plus"/></svg><span>添加修改器</span></button>
            <section class="mod">
              <div class="mhead"><svg class="dn"><use href="#down"/></svg><svg class="ic"><use href="#geo"/></svg><div class="grp"><button class="lit" aria-label="框架"><svg class="ic"><use href="#mesh"/></svg></button><button class="blue" aria-label="编辑模式"><svg class="ic"><use href="#editbox"/></svg></button><button class="blue" aria-label="实时"><svg class="ic"><use href="#monitor"/></svg></button><button class="blue" aria-label="渲染"><svg class="ic"><use href="#cam"/></svg></button><button class="chbtn" aria-label="更多"><svg class="ch"><use href="#chev"/></svg></button></div><button class="flat" aria-label="移除"><svg class="ic"><use href="#x"/></svg></button><svg class="grip"><use href="#grip"/></svg></div>
              <div class="idsel"><button class="pick" aria-label="节点组"><svg class="ic"><use href="#nodes"/></svg><svg class="ch"><use href="#chev"/></svg></button><input aria-label="节点组名称" value="Geometry ..."><button class="lit dim" aria-label="伪用户"><svg class="ic"><use href="#shield"/></svg></button><button class="lit" aria-label="新建"><svg class="ic"><use href="#copy"/></svg></button><button class="lit" aria-label="断开"><svg class="ic"><use href="#x"/></svg></button></div>
              <div class="prow"><label for="f1">尺寸 X</label><input id="f1" value="20 mm"><i></i></div>
              <div class="prow"><label for="f2">尺寸 Y</label><input id="f2" value="20 mm"><i></i></div>
              <div class="prow"><label for="f3">顶点 X</label><input id="f3" value="4"><i></i></div>
              <div class="prow"><label for="f4">顶点 Y</label><input id="f4" value="6"><i></i></div>
              <div class="prow"><label for="f5">gaodu-...</label><input id="f5" value="0.010"><button class="lit" aria-label="属性"><svg class="ic"><use href="#sheet"/></svg></button><i></i></div>
              <div class="prow"><label for="f6">gaodu-x...</label><input id="f6" value="0.030"><button class="lit" aria-label="属性"><svg class="ic"><use href="#sheet"/></svg></button><i></i></div>
              <div class="prow"><label for="f7">gaodu-x...</label><input id="f7" value="-0.500"><button class="lit" aria-label="属性"><svg class="ic"><use href="#sheet"/></svg></button><i></i></div>
              <div class="manage"><svg class="rt"><use href="#right"/></svg>管理</div>
            </section>
          </div>
        </div>
      </section>
    </aside>
  </main>

  <footer class="status">
    <span class="hint h1"><svg class="ms"><use href="#mouseL"/></svg>选择</span>
    <span class="hint h2"><svg class="ms"><use href="#mouseM"/></svg>平移视图</span>
    <span class="hint h3"><svg class="ms"><use href="#mouseR"/></svg>节点</span>
    <span class="stats">Collection | Cube | 顶点:16,409 | 面:10,907 | 三角面:22,044 | 物体:0/36 | 时长: 00:10+10 (帧 247/250) | 内存: 48.4 MiB | 显存: 0.4/2</span>
  </footer>
  <div class="mark"><svg viewBox="0 0 40 40"><path d="M6 0h28a6 6 0 0 1 6 6v28a6 6 0 0 1-6 6H6a6 6 0 0 1-6-6V6a6 6 0 0 1 6-6zM9 16a8 6 0 0 1 15-5l10 10-4 4-9-6c-8 4-12 1-12-3zM18 26v9h5v-9z" fill="#fff" fill-rule="evenodd"/></svg>tafe.cc</div>
</div>
</body>
</html>
```
FILE: styles.css
```css
* { box-sizing: border-box; }
body {
  margin: 0;
  background: #181818;
  color: #e0e0e0;
  font: 17px/24px Inter, "Noto Sans CJK SC", sans-serif;
  overflow: hidden;
}
button, input, select { font: inherit; color: inherit; border: 0; background: none; padding: 0; margin: 0; min-width: 0; }
ul, p, h1 { margin: 0; padding: 0; list-style: none; }
a { color: inherit; text-decoration: none; }
b, em, i { font-weight: 400; font-style: normal; }
svg { display: block; flex: none; }
.defs { display: none; }
.s1, .s15, .s2, .s3 { fill: none; stroke: currentColor; stroke-width: 1; }
.s15 { stroke-width: 1.5; }
.s2 { stroke-width: 2; }
.s3 { stroke-width: 3; }
.ic { width: 22px; height: 22px; }
.ch { width: 12px; height: 12px; }
.dn { width: 16px; height: 12px; }
.rt { width: 12px; height: 16px; }

.app { display: flex; flex-direction: column; min-height: 100vh; position: relative; }

/* Window title */
.title { display: flex; align-items: center; height: 34px; background: #fff; color: #111; padding-left: 3px; }
.title h1 { flex: 1; margin-left: 6px; font: 400 18px/32px "Noto Sans", sans-serif; white-space: nowrap; }
.logo { color: #e0812b; --hole: #fff; --dot: #2a5a94; }
.winbtns { display: flex; }
.winbtns button { width: 70px; height: 32px; display: grid; place-items: center; }
.winbtns svg { width: 16px; height: 16px; }

/* Shared controls */
button { display: flex; align-items: center; justify-content: center; height: 27px; white-space: nowrap; flex: none; }
.pick { width: 44px; gap: 3px; background: #282828; border-radius: 4px; }
.lit { width: 28px; background: #505050; }
.blue { width: 28px; background: #4772b3; color: #fff; --hole: #4772b3; }
.flat { width: 28px; }
.dim { color: #999; }
.off { width: 29px; background: #2b2b2b; color: #777; }
.chbtn { width: 28px; background: #282828; border-radius: 0 4px 4px 0; }
.grp { display: flex; }
.grp > :first-child { border-radius: 4px 0 0 4px; }
.grp > :last-child { border-radius: 0 4px 4px 0; }
.w24 { width: 25px; }
.sel { display: flex; align-items: center; height: 27px; background: #282828; border-radius: 4px; padding: 0 3px 0 10px; flex: none; }
.sel select { appearance: none; flex: 1; height: 27px; outline: 0; }
.sel .ic { margin: 0 9px 0 -6px; }
.w133 { width: 133px; }
.w127 { width: 127px; }
.w88 { width: 88px; }
.w142 { width: 142px; }
.w74 { width: 74px; }
.w99 { width: 99px; }
.menus { display: flex; }
.menus button { padding: 0 11px; }
.find { display: flex; align-items: center; height: 27px; background: #1d1d1d; border-radius: 4px; padding: 0 5px; color: #ccc; }
.find input { flex: 1; margin-left: 10px; outline: 0; }
.find input::placeholder { color: #777; opacity: 1; }
.idsel { display: flex; height: 28px; border-radius: 4px; overflow: hidden; background: #1d1d1d; flex: none; }
.idsel .pick { border-radius: 0; width: 45px; height: 28px; }
.idsel > button { height: 28px; }
.idsel input { flex: 1; padding-left: 11px; background: #1d1d1d; text-overflow: ellipsis; }
.hdr { display: flex; align-items: center; height: 38px; padding: 0 11px 0 12px; flex: none; }
.right { display: flex; margin-left: auto; gap: 10px; }

/* Top bar */
.topbar { display: flex; height: 40px; padding: 5px 12px 0 12px; align-items: flex-start; }
.topbar .big { width: 25px; height: 28px; }
.topbar .menus { margin-left: 3px; }
.topbar > .menus button, .theme, .lang { height: 29px; }
.lang { width: 115px; background: #505050; }
.theme { gap: 15px; margin-left: 12px; }
.theme i { border: 6px solid transparent; border-top: 10px solid #ddd; border-bottom: 0; }
.tabs { display: flex; margin-left: 34px; gap: 1px; }
.tabs button { height: 30px; padding: 0 14px; margin-top: 3px; color: #989898; border-radius: 4px 4px 0 0; }
.tabs .on { background: #303030; color: #fff; }
.scene-sel { width: 247px; margin-left: auto; }
.layer-sel { width: 218px; margin-left: 9px; }

/* Work area */
.work { flex: 1; display: grid; grid-template-columns: minmax(0, 1fr) 346px; gap: 3px; }
.leftcol { display: flex; flex-direction: column; gap: 3px; min-width: 0; }
.rightcol { display: flex; flex-direction: column; gap: 3px; min-width: 0; }
.upper { display: flex; gap: 3px; flex: 452 0 452px; }
.sheet { width: 291px; background: #303030; border-radius: 6px; display: flex; flex-direction: column; overflow: hidden; }
.sheet .sel { margin-left: 10px; }
.objname { display: flex; margin-left: 12px; gap: 12px; align-items: center; white-space: nowrap; }
.sheetbody { flex: 1; display: flex; margin-top: 12px; min-height: 0; }
.dataset { width: 210px; margin-left: 15px; padding: 5px 5px 0; background: #262626; border-top: 1px solid #3c3c3c; height: 365px; overflow: hidden; flex: none; }
.dataset li { display: flex; align-items: center; height: 32px; padding-right: 9px; }
.dataset .ic { margin: 0 13px 0 7px; width: 23px; height: 23px; }
.dataset em { margin-left: auto; color: #6f6f6f; }
.dataset .sub .ic { margin-left: 0; }
.dataset .sub { margin-left: 9px; padding-left: 33px; border-left: 1px solid #3a3a3a; }
.dataset .sub b { margin-left: -1px; }
.dataset .leaf { padding-left: 16px; }
.dataset .picked { background: #4772b3; border-radius: 5px; margin-top: 2px; }
.vbar { width: 5px; background: #3b3b3b; margin: 0 9px 50px 5px; border-radius: 3px; }
.rows { border-collapse: collapse; flex: none; width: 52px; height: 365px; table-layout: fixed; }
.rows th { height: 17px; padding: 0; border-bottom: 1px solid #161616; }
.rows td { height: 29px; padding: 0; text-align: right; color: #bbb; overflow: hidden; }
.rows th + th, .rows td + td { width: 14px; }
.rows td + td::before { content: ""; display: block; width: 5px; height: 5px; margin: -8px 0 0 9px; border: solid #aaa; border-width: 0 0 2px 2px; }
.sheetfoot { height: 37px; display: flex; align-items: center; justify-content: flex-end; gap: 13px; padding-right: 12px; flex: none; }

/* 3D viewport */
.view { flex: 1; position: relative; border-radius: 6px; overflow: hidden; background: #3d3d3d; min-width: 0; }
.scene { position: absolute; inset: 0; width: 100%; height: 100%; }
.ztext { font: 600 16px Inter, sans-serif; fill: #0d1c30; }
.vhdr { position: relative; display: flex; align-items: center; height: 38px; padding: 0 11px 0 12px; background: rgba(56, 56, 56, .72); }
.vp { width: 41px; margin-right: 13px; }
.vm { margin-left: 9px; }
.orient { margin-left: 45px; }
.narrow { width: 42px; margin: 0 14px 0 11px; }
.faded { opacity: .55; margin-left: 10px; }
.vhdr .right .chbtn { width: 25px; }
.vhdr .right .shading .chbtn { width: 28px; }
.second { height: 35px; }
.lab { flex: none; white-space: nowrap; }
.second .w142 { margin-left: 8px; }
.drag { margin: 0 14px; }
.assets { display: flex; align-items: center; margin-left: 26px; gap: 7px; }
.ball { width: 20px; height: 22px; border-radius: 50%; margin-right: 1px; background: linear-gradient(135deg, #2b8 10%, #1bb 35%, #b84 55%, #d33 80%); }
.wide { width: 315px; margin: 0 3px 0 4px; }
.second .lit { background: #464646; }
.opts { width: 66px; margin-left: auto; gap: 9px; }
.viewbody { position: relative; display: flex; padding: 4px 0 0 12px; }
.toolbar { display: flex; flex-direction: column; gap: 7px; width: 58px; }
.tg { border-radius: 5px; overflow: hidden; }
.tg button { width: 58px; height: 50px; background: #282828; border-bottom: 1px solid #383838; position: relative; }
.tg svg { width: 36px; height: 36px; }
.tg .on { background: #4772b3; }
.more::after { content: ""; position: absolute; right: 3px; bottom: 3px; border: 3px solid transparent; border-right-color: #888; border-bottom-color: #888; }
.hud { margin: 10px 0 0 25px; color: #fff; text-shadow: 0 0 3px #000, 1px 1px 2px #000; }
.hud p { line-height: 27px; }
.keys { margin: 46px 0 0 23px; width: 196px; text-shadow: 0 0 2px #333; }
.keys strong { display: block; font-weight: 400; font-size: 39px; line-height: 48px; }
.bigmouse { width: 46px; height: 60px; margin-top: 18px; }
.keys hr { border: 0; height: 3px; background: #fff; margin: 20px 0 14px; }

/* Node editor */
.nodeed { display: flex; flex-direction: column; flex: 443 0 443px; background: #2b2b2b; border-radius: 6px; overflow: hidden; min-height: 0; }
.nh { background: #232323; height: 37px; }
.nh .pick, .nh .sel, .nh .chbtn { background: #202020; }
.nh .sel { margin-left: 10px; }
.nh .menus { margin-left: 8px; }
.tree-sel { width: 283px; margin: 0 9px 0 215px; }
.nh .tree-sel input { font-size: 16px; padding-left: 12px; }
.nh .right { gap: 9px; }
.canvas { position: relative; flex: 1; overflow: hidden; }
.links { position: absolute; left: 0; top: 0; width: 1571px; height: 406px; }
.crumbs { position: relative; display: flex; align-items: center; height: 64px; }
.crumbs a { display: flex; align-items: center; gap: 12px; white-space: nowrap; }
.crumbs .rt { margin: 0 12px; }
.crumbs > .rt:first-child { margin: 0 19px 0 -3px; }
.crumbs > .end { margin: 0 -1px 0 auto; }
.num { display: flex; position: relative; }
.num sub { position: absolute; right: -3px; bottom: -5px; font-size: 13px; line-height: 16px; }
.node { position: absolute; background: #303030; border-radius: 5px; font-size: 15px; box-shadow: 0 2px 8px #111; }
.node header { display: flex; align-items: center; height: 27px; border-radius: 5px 5px 0 0; font-size: 16px; }
.node p { position: relative; display: flex; align-items: center; height: 28px; padding: 0 14px; white-space: nowrap; }
.node .out { justify-content: flex-end; }
.sock { position: absolute; left: -6px; width: 11px; height: 11px; border-radius: 50%; }
.out .sock { left: auto; right: -6px; }
.geo { background: #1ddc9b; }
.dia { border-radius: 0; transform: rotate(45deg); width: 9px; height: 9px; background: #a1a1a1; margin: 0 1px; }
.pk, .pkc { background: #bea3c4; }
.hollow { background: #222; border: 3px solid #a5a0a8; }
.ring { background: #303030; border: 2px solid #777; width: 13px; height: 13px; }
.n-in { left: -4px; top: 70px; width: 80px; height: 121px; border-radius: 0 5px 5px 0; }
.n-in header { background: #1e1e1e; margin-bottom: 4px; border-radius: 0 5px 0 0; }
.n-gen { left: 163px; top: 368px; width: 464px; height: 60px; background: #3f3f47; }
.n-gen header, .n-ji header { background: #384a25; padding: 0 7px 0 12px; }
.node header span { margin-left: 5px; white-space: nowrap; }
.node header > .ic { margin-left: auto; }
.n-ji { left: 1070px; top: 111px; width: 298px; height: 320px; border: 1px solid #eee; }
.n-ji header { margin-bottom: 5px; padding: 0 0 0 12px; height: 26px; }
.n-ji header .num { margin-left: 1px; }
.n-ji .idsel { height: 26px; margin: 3px 14px 3px; font-size: 16px; }
.n-ji .idsel > button { height: 26px; }
.n-ji .idsel .pick { width: 42px; background: #262626; }
.n-ji .idsel .blue { width: 26px; }
.n-ji .idsel .cnt { width: 31px; font-size: 15px; }
.n-ji .idsel input { padding-left: 7px; }
.slider { display: flex; align-items: center; flex: 1; height: 26px; background: #505050; border-radius: 4px; padding: 0 18px 0 20px; }
.slider input { flex: 1; width: 60px; text-align: right; }
.tick { display: flex; align-items: center; gap: 5px; }
input[type=checkbox] { appearance: none; width: 16px; height: 16px; border-radius: 3px; background: #4772b3; display: grid; place-items: center; }
input[type=checkbox]::after { content: ""; width: 9px; height: 5px; border: solid #fff; border-width: 0 0 2px 2px; transform: rotate(-45deg) translate(1px, -1px); }
.hscroll { position: absolute; left: 88px; top: 401px; width: 1048px; height: 4px; background: rgba(90, 90, 90, .35); }
.vscroll { position: absolute; right: 3px; top: 99px; width: 5px; height: 156px; background: #3c3c3c; border-radius: 3px; }
.cursor { position: absolute; left: 1232px; top: 127px; width: 18px; height: 26px; }

/* Timeline */
.time { flex: none; background: #303030; border-radius: 6px; overflow: hidden; }
.time .hdr { height: 37px; }
.time .tmenu { margin-left: 14px; }
.time .tmenu .pick { width: 70px; gap: 12px; }
.time .menus { margin-left: -1px; }
.recg { margin-left: 332px; }
.ghost { background: #2b2b2b; color: #555; }
.play { margin-left: 8px; }
.play .ic { width: 20px; height: 20px; }
.play button { border-right: 1px solid #444; width: 29px; }
.flip { transform: scaleX(-1); }
.num-in { width: 106px; height: 27px; text-align: center; background: #505050; border-radius: 4px; }
.time .right { gap: 9px; }
.fr { display: flex; align-items: center; width: 128px; height: 27px; background: #505050; border-left: 1px solid #383838; padding: 0 20px 0 23px; }
.fr input { flex: 1; width: 40px; text-align: right; }
.ruler { position: relative; height: 36px; background: #1d1d1d; }
.ticks { display: flex; padding: 6px 32px 0 38px; color: #989898; }
.ticks span { flex: 1; text-align: center; }
.tbar { position: absolute; left: 178px; right: 72px; bottom: 1px; height: 13px; border-radius: 7px; background: #4c4c4c; }
.cur { position: absolute; right: 0; top: 4px; width: 41px; padding-left: 3px; line-height: 26px; text-align: center; background: #4772b3; color: #fff; border-radius: 4px 0 0 4px; }
.ruler .rt { position: absolute; left: 0; bottom: 0; color: #999; }

/* Outliner */
.outl { flex: 277 0 277px; background: #282828; border-radius: 6px; display: flex; flex-direction: column; overflow: hidden; }
.outl .hdr { gap: 11px; padding: 0 0 0 11px; background: #2b2b2b; }
.outl .find { width: 173px; margin-left: 10px; flex: none; }
.cut { margin-left: 16px; }
.otree { flex: 1; padding: 1px 18px 0 33px; }
.otree li { display: flex; align-items: center; height: 29px; color: #c8c8c8; }
.otree span { margin-left: 8px; }
.otree .l1 { padding-left: 2px; }
.otree .l2 { padding-left: 34px; }
.chip { display: grid; place-items: center; width: 27px; height: 27px; border-radius: 5px; background: #464646; margin-left: 9px; }
.otree .chip + span { margin-left: 6px; }
.l2 .purple { margin-left: 32px; }
.l2 .green { margin-left: 7px; }
.tog { display: flex; align-items: center; gap: 7px; margin-left: auto; color: #e0e0e0; }
.tog input[type=checkbox] { background: #e0e0e0; margin-right: 4px; }
.tog input[type=checkbox]::after { border-color: #222; }
.orange { color: #c87d43; }
.purple { color: #7b8be0; }
.green { color: #29c493; }
.red { color: #b8506a; }
.obar { height: 4px; margin: 0 20px 3px 12px; background: #3a3a3a; border-radius: 2px; }

/* Properties */
.propsed { flex: 694 0 694px; background: #303030; border-radius: 6px; display: flex; flex-direction: column; overflow: hidden; margin-right: 3px; }
.propsed .hdr { padding: 0 11px 0 14px; }
.propsed .hdr .find { width: 172px; margin: 0 auto 0 34px; }
.propsed .hdr .chbtn { width: 26px; border-radius: 4px; }
.pbody { flex: 1; display: flex; }
.ptabs { width: 43px; background: #1d1d1d; padding: 10px 0 0 4px; display: flex; flex-direction: column; }
.ptabs button { height: 40px; width: 39px; color: #b5b5b5; border-radius: 5px 0 0 5px; }
.ptabs .gap { margin-top: 11px; }
.ptabs .on { background: #303030; --f: #7b8be0; }
.ptabs .purple { color: #7b8be0; }
.ptabs .green { color: #29c493; }
.ptabs .orange { color: #c87d43; }
.ptabs .red { color: #b8506a; }
.pmain { flex: 1; padding: 10px 10px 0 11px; min-width: 0; }
.pcrumb { display: flex; align-items: center; height: 30px; padding: 0 0 0 5px; font-size: 16px; }
.pcrumb span { margin-left: 13px; }
.pcrumb .rt { margin: 0 15px 0 14px; }
.pcrumb .flat { margin-left: auto; }
.addmod { width: calc(100% - 2px); margin: 25px 0 15px 2px; background: #505050; border-radius: 4px; padding: 0 6px; }
.addmod span { flex: 1; }
.mod { height: 370px; background: #3d3d3d; border: 1px solid #56659a; border-radius: 5px; }
.mhead { display: flex; align-items: center; height: 38px; padding-left: 9px; gap: 7px; }
.mhead .grp { margin-left: 8px; }
.mhead .grp button { width: 27px; }
.mhead .flat { width: 20px; }
.grip { width: 16px; height: 8px; margin: 0 10px 10px auto; }
.mod .idsel { margin: 9px 12px 5px; }
.mod .idsel input { font-size: 16px; }
.mod .pick, .mod .chbtn { background: #2a2a2a; }
.prow { display: flex; align-items: center; height: 36px; }
.prow label { width: 96px; text-align: right; white-space: nowrap; flex: none; }
.prow input { width: 97px; height: 27px; margin-left: 13px; background: #545454; border-radius: 4px; text-align: center; flex: none; }
.prow .lit { background: #464646; margin-left: 1px; }
.prow .ic { width: 25px; height: 23px; }
.prow i { width: 6px; height: 6px; border-radius: 50%; background: #e0e0e0; margin: 0 23px 0 auto; }
.manage { display: flex; align-items: center; gap: 10px; height: 36px; padding-left: 20px; }

/* Status bar */
.status { display: flex; align-items: center; height: 32px; color: #8f8f8f; white-space: nowrap; overflow: hidden; }
.hint { display: flex; align-items: center; gap: 7px; flex: none; }
.ms { width: 18px; height: 24px; }
.h1 { width: 283px; margin-left: 17px; }
.h2 { width: 282px; }
.h3 { width: 316px; }
.stats { flex: none; }
.mark { position: absolute; left: 11px; bottom: 13px; display: flex; align-items: center; gap: 8px; opacity: .4; color: #fff; font: 700 36px/38px "Open Sans", sans-serif; }
.mark svg { width: 38px; height: 38px; }
```
